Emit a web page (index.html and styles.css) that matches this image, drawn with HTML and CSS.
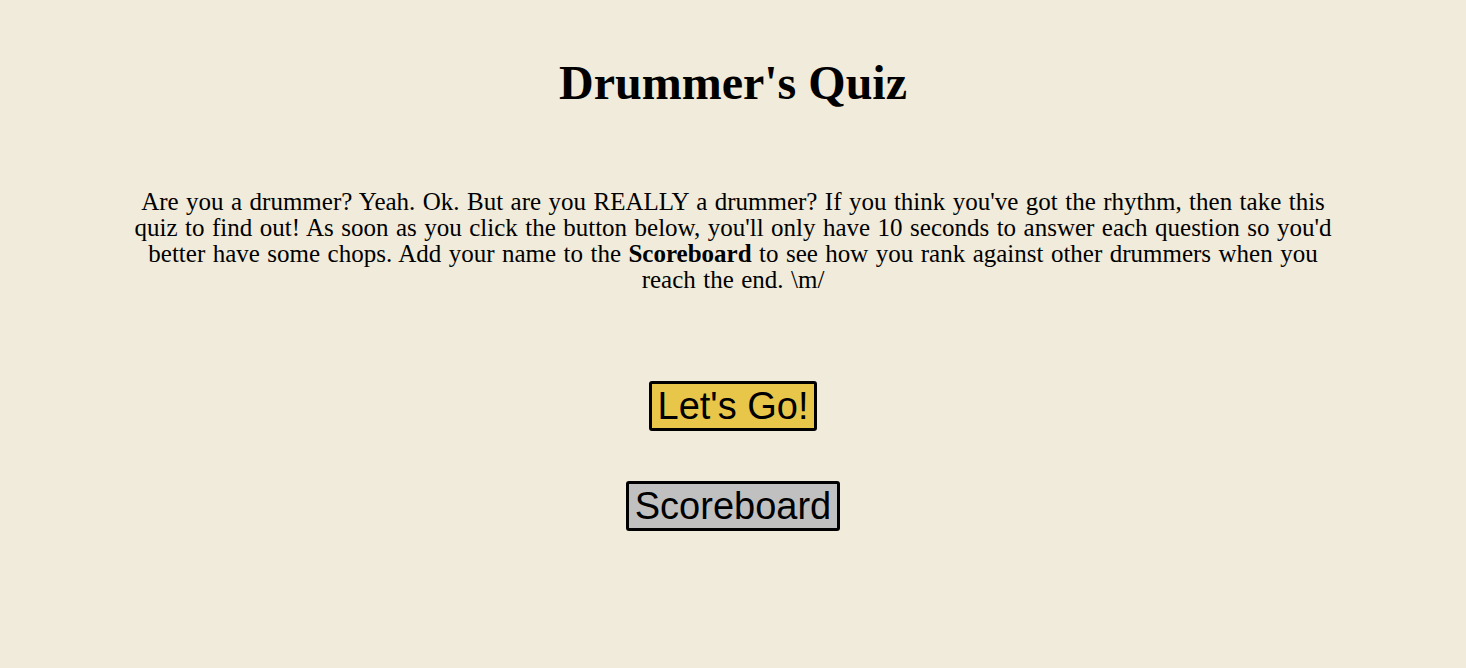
FILE: index.html
```html
<!DOCTYPE html>
<html>
<head>
<meta charset="utf-8">
<link rel="stylesheet" href="styles.css">
</head>
<body>
<main class="page">
  <h1 class="title">Drummer's Quiz</h1>
  <p class="intro">Are you a drummer? Yeah. Ok. But are you REALLY a drummer? If you think you've got the rhythm, then take this quiz to find out! As soon as you click the button below, you'll only have 10 seconds to answer each question so you'd better have some chops. Add your name to the <b>Scoreboard</b> to see how you rank against other drummers when you reach the end. \m/</p>
  <div class="actions">
    <button class="btn btn-go">Let's Go!</button>
    <button class="btn btn-score">Scoreboard</button>
  </div>
</main>
</body>
</html>
```
FILE: styles.css
```css
html, body {
  margin: 0;
  padding: 0;
  background: #f1ebdb;
}
body {
  font-family: "Liberation Serif", "Times New Roman", serif;
  color: #000;
}
.page {
  width: 1210px;
  margin: 0 auto;
  padding-top: 54px;
  display: flex;
  flex-direction: column;
  align-items: center;
}
.title {
  font-size: 48px;
  font-weight: bold;
  margin: 0;
  line-height: 58px;
}
.intro {
  margin: 77px 0 0;
  font-size: 25px;
  line-height: 26px;
  word-spacing: 1.2px;
  text-align: center;
}
.actions {
  margin-top: 88px;
  display: flex;
  flex-direction: column;
  align-items: center;
  gap: 50px;
}
.btn {
  font-family: "Liberation Sans", Arial, sans-serif;
  font-size: 38px;
  line-height: 42px;
  padding: 1px 6px;
  border: 3px solid #000;
  border-radius: 3px;
  color: #000;
  margin: 0;
}
.btn-go {
  background: #e8c64a;
}
.btn-score {
  background: #c0c0c0;
}
```
